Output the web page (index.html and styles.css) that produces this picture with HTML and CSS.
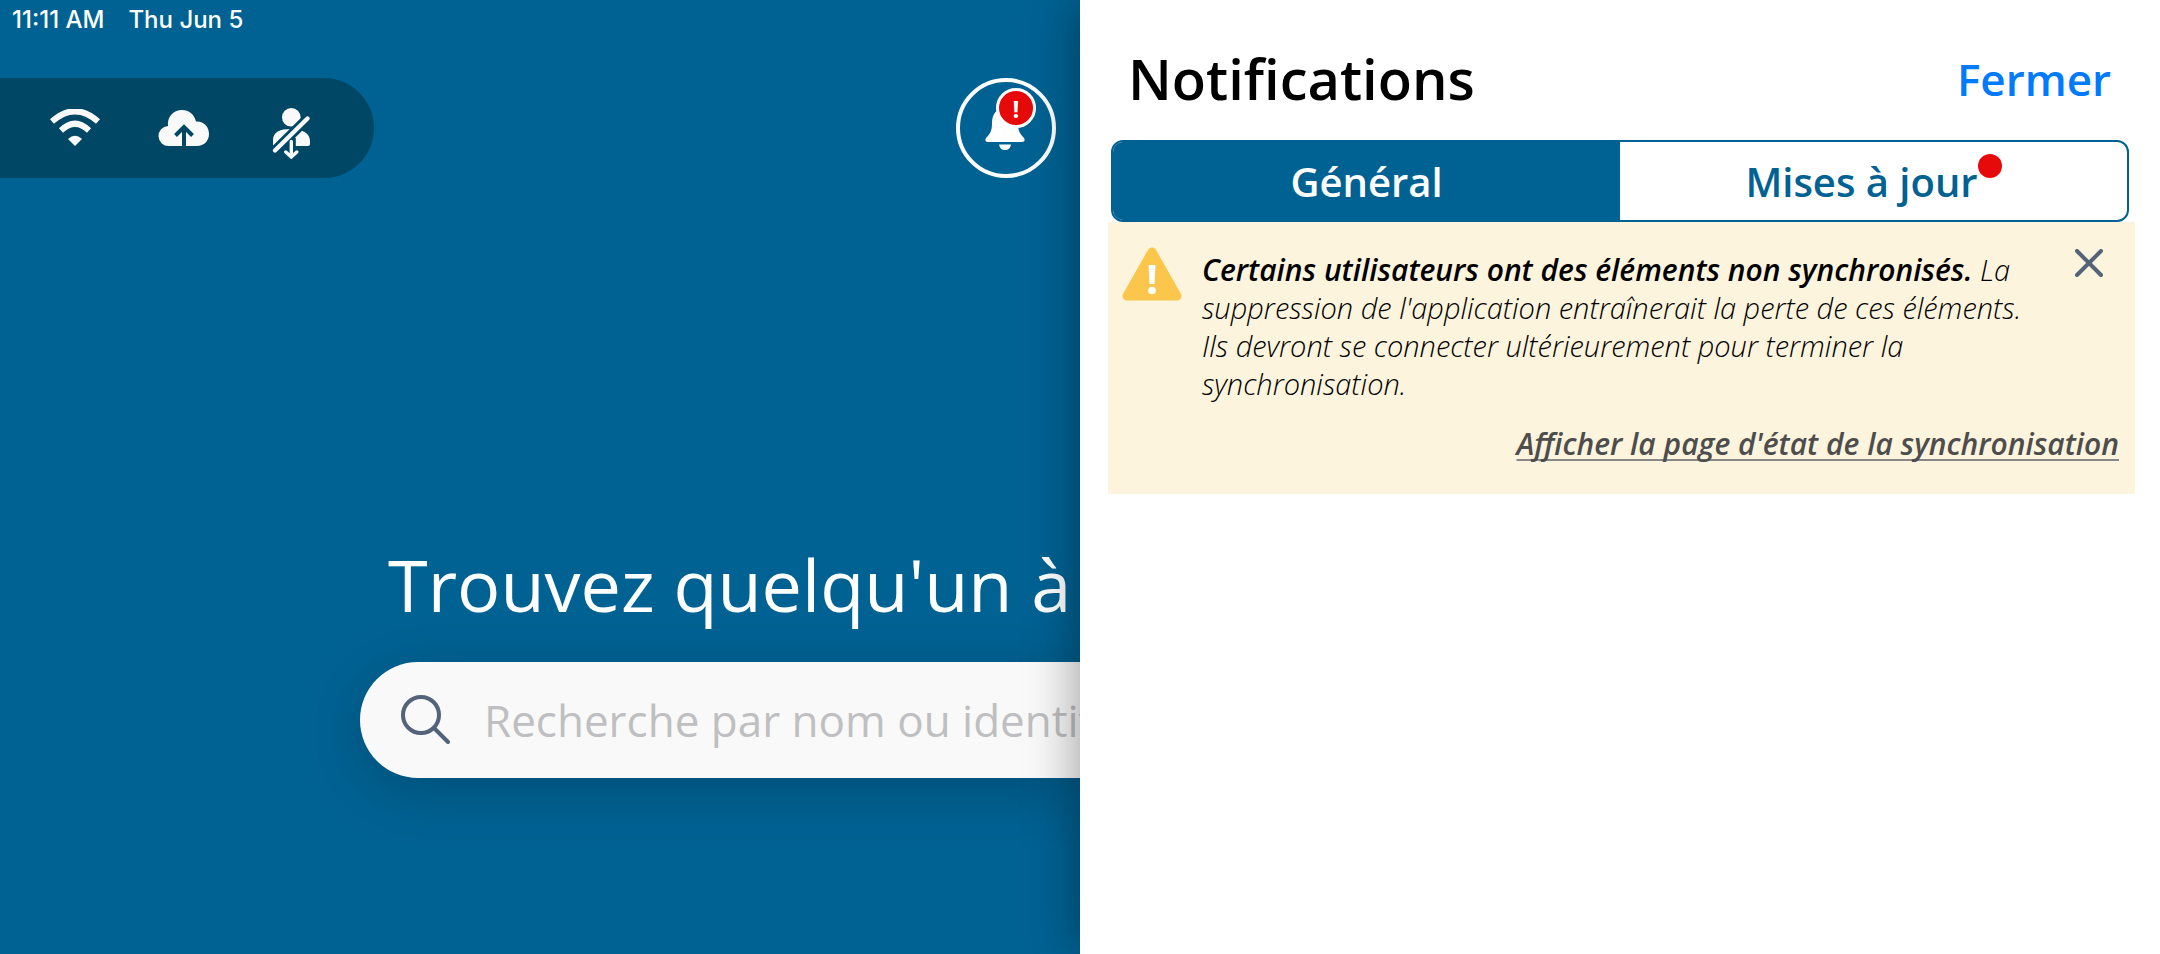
FILE: index.html
```html
<!DOCTYPE html>
<html lang="fr">

<head>
    <meta charset="UTF-8">
    <meta name="viewport" content="width=device-width, initial-scale=1">
    <title>Notifications</title>
    <link rel="stylesheet" href="styles.css">
</head>

<body>
    <div class="app">
        <main class="home">
            <div class="status-bar">
                <span>11:11 AM</span>
                <span>Thu Jun 5</span>
            </div>

            <div class="toolbar">
                <div class="sync-pill">
                    <svg class="icon-wifi" viewBox="0 0 52 38">
                        <path d="M3 12.500Q26-8 49 12.500M12 21.500Q26 8 40 21.500" fill="none" stroke="#f9f9f9" stroke-width="6" />
                        <path d="M19 30Q26 23.500 33 30L26 37Z" fill="#f9f9f9" />
                    </svg>
                    <svg class="icon-cloud" viewBox="0 0 52 38">
                        <path d="M11 37A10 10 0 0 1 10 17C9 8 15 1 24 1C31 1 36 5 38 12.500C46 12 51 18 51 25C51 32 46 37 39 37Z" fill="#f9f9f9" />
                        <path d="M26 38V19M17.500 26.500L26 18L34.500 26.500" fill="none" stroke="#004766" stroke-width="4" />
                    </svg>
                    <svg class="icon-user" viewBox="-5 0 48 52">
                        <circle cx="19.300" cy="10.300" r="9.300" fill="#f9f9f9" />
                        <path d="M1 39V33C1 25 8 22 19 22C30 22 38 26 38 34V37Q38 39 36 39Z" fill="#f9f9f9" />
                        <path d="M19.300 31V44" fill="none" stroke="#004766" stroke-width="9" />
                        <path d="M-2 48.500L38 9" fill="none" stroke="#004766" stroke-width="10" />
                        <path d="M3 43.500L35.500 11.500" fill="none" stroke="#f9f9f9" stroke-width="4.400" stroke-linecap="round" />
                        <path d="M19.300 34.500V49M13.800 45L19.300 50L24.800 45" fill="none" stroke="#f9f9f9" stroke-width="3.400" stroke-linecap="round" />
                    </svg>
                </div>
                <button class="bell" type="button" aria-label="Notifications">
                    <svg class="icon-bell" viewBox="1 0 40 44">
                        <path d="M20 2C11 2 7 9 7 17C7 25 5 28 1 32Q-1 36 3 36H37Q41 36 39 32C35 28 33 25 33 17C33 9 29 2 20 2ZM14 38.500H26Q25 44 20 44Q15 44 14 38.500Z" fill="#fff" />
                    </svg>
                    <span class="bell-badge">!</span>
                </button>
            </div>

            <section class="finder">
                <h1 class="finder-title">Trouvez quelqu'un à</h1>
                <label class="search">
                    <svg class="icon-search" viewBox="0 0 50 50">
                        <circle cx="20" cy="20" r="18" />
                        <path d="M33 33L47 47" />
                    </svg>
                    <input class="search-input" type="text" aria-label="Recherche" placeholder="Recherche par nom ou identifiant">
                </label>
            </section>
        </main>

        <aside class="panel">
            <header class="panel-header">
                <h2 class="panel-title">Notifications</h2>
                <button class="close-link" type="button">Fermer</button>
            </header>

            <div class="tabs">
                <button class="tab tab-active" type="button">Général</button>
                <button class="tab" type="button"><span class="tab-label">Mises à jour<i class="dot"></i></span></button>
            </div>

            <div class="alert">
                <div class="alert-body">
                    <svg class="icon-warning" viewBox="0 0 60 54">
                        <path d="M30 5L55 49H5Z" fill="#fbc64b" stroke="#fbc64b" stroke-width="9" stroke-linejoin="round" />
                        <path d="M26.500 18H33.500L32.500 37H27.500Z" fill="#fff" />
                        <circle cx="30" cy="43.500" r="3.800" fill="#fff" />
                    </svg>
                    <p class="alert-text"><strong>Certains utilisateurs ont des éléments non synchronisés.</strong> La suppression de l'application entraînerait la perte de ces éléments. Ils devront se connecter ultérieurement pour terminer la synchronisation.</p>
                    <button class="dismiss" type="button" aria-label="Ignorer">
                        <svg class="icon-close" viewBox="0 0 28 28">
                            <path d="M2 2L26 26M26 2L2 26" />
                        </svg>
                    </button>
                </div>
                <a class="alert-link" href="#">Afficher la page d'état de la synchronisation</a>
            </div>
        </aside>
    </div>
</body>

</html>
```
FILE: styles.css
```css
* {
    box-sizing: border-box;
}

body {
    margin: 0;
    font-family: "Open Sans", "Noto Sans", sans-serif;
}

button {
    margin: 0;
    padding: 0;
    border: 0;
    background: none;
    font-family: inherit;
    cursor: pointer;
}

h1,
h2,
p {
    margin: 0;
}

svg {
    display: block;
    flex: none;
}

.app {
    display: flex;
    min-height: 100vh;
}

/* left side */
.home {
    width: 50%;
    overflow: hidden;
    background: #006293;
}

.status-bar {
    display: flex;
    gap: 24px;
    padding: 4px 12px;
    font-family: Inter, sans-serif;
    font-size: 24px;
    font-weight: 500;
    line-height: 32px;
    color: #fff;
}

.toolbar {
    display: flex;
    justify-content: space-between;
    margin-top: 38px;
    padding-right: 24px;
}

.sync-pill {
    display: flex;
    align-items: center;
    gap: 57px;
    height: 100px;
    padding: 0 59px 0 49px;
    border-radius: 0 50px 50px 0;
    background: #004766;
}

.icon-wifi,
.icon-cloud {
    width: 52px;
    height: 38px;
}

.icon-user {
    width: 48px;
    height: 52px;
    margin-top: 10px;
}

.bell {
    position: relative;
    display: flex;
    align-items: center;
    justify-content: center;
    width: 100px;
    height: 100px;
    border: 4px solid #fff;
    border-radius: 50%;
}

.icon-bell {
    width: 40px;
    height: 44px;
    overflow: visible;
}

.bell-badge {
    position: absolute;
    top: 6px;
    left: 36px;
    width: 40px;
    height: 40px;
    border: 3px solid #fff;
    border-radius: 50%;
    background: #e60a0a;
    font-size: 24px;
    font-weight: 700;
    line-height: 36px;
    text-align: center;
    color: #fff;
}

.finder {
    margin-top: 358px;
    padding-left: 33.333%;
}

.finder-title {
    padding-left: 28px;
    font-size: 72px;
    font-weight: 400;
    line-height: 96px;
    white-space: nowrap;
    color: #fff;
}

.search {
    display: flex;
    align-items: center;
    gap: 33px;
    height: 116px;
    margin-top: 30px;
    padding-left: 41px;
    border-radius: 58px 0 0 58px;
    background: #f9f9f9;
    box-shadow: 0 12px 60px rgba(0, 0, 0, 0.2);
}

.icon-search {
    width: 50px;
    height: 50px;
    fill: none;
    stroke: #53637a;
    stroke-width: 4;
    stroke-linecap: round;
}

.search-input {
    flex: 1;
    min-width: 0;
    padding: 0;
    border: 0;
    outline: 0;
    background: none;
    font-family: inherit;
    font-size: 44px;
    line-height: 60px;
    color: #222;
}

.search-input::placeholder {
    color: #bfbfc1;
}

/* notifications */
.panel {
    position: relative;
    width: 50%;
    padding: 38px 25px 0 28px;
    background: #fff;
    box-shadow: 0 0 50px rgba(0, 0, 0, 0.4);
}

.panel-header {
    display: flex;
    align-items: center;
    justify-content: space-between;
    height: 80px;
    padding: 0 24px 0 20px;
}

.panel-title {
    font-size: 56px;
    font-weight: 600;
    line-height: 80px;
    color: #000;
}

.close-link {
    padding-top: 2px;
    font-size: 44px;
    font-weight: 600;
    line-height: 60px;
    color: #007aff;
}

.tabs {
    display: flex;
    height: 82px;
    margin: 22px 6px 0 3px;
    border: 2px solid #006293;
    border-radius: 12px;
    overflow: hidden;
}

.tab {
    flex: 1;
    font-size: 40px;
    font-weight: 600;
    color: #006293;
}

.tab-active {
    background: #006293;
    color: #fff;
}

.tab-label {
    position: relative;
    padding-right: 24px;
}

.dot {
    position: absolute;
    top: 0;
    right: 0;
    width: 24px;
    height: 24px;
    border-radius: 50%;
    background: #e60a0a;
}

.alert {
    padding: 25px 16px 31px 14px;
    background: #fdf4de;
    font-size: 30px;
    font-style: italic;
    line-height: 38px;
}

.alert-body {
    display: flex;
    align-items: flex-start;
    gap: 20px;
}

.icon-warning {
    width: 60px;
    height: 54px;
}

.alert-text {
    flex: 1;
    padding-top: 4px;
    font-size: 29px;
    font-weight: 300;
    color: #000;
}

.alert-text strong {
    font-size: 30px;
    font-weight: 600;
}

.dismiss {
    width: 60px;
    padding: 2px 16px;
}

.icon-close {
    width: 28px;
    height: 28px;
    fill: none;
    stroke: #53637a;
    stroke-width: 4;
    stroke-linecap: round;
}

.alert-link {
    display: block;
    width: fit-content;
    margin: 22px 0 0 auto;
    font-weight: 600;
    color: #4d4d4d;
    text-decoration-thickness: 2px;
    text-decoration-color: #888;
    text-underline-offset: 4px;
    text-decoration-skip-ink: none;
}
```
